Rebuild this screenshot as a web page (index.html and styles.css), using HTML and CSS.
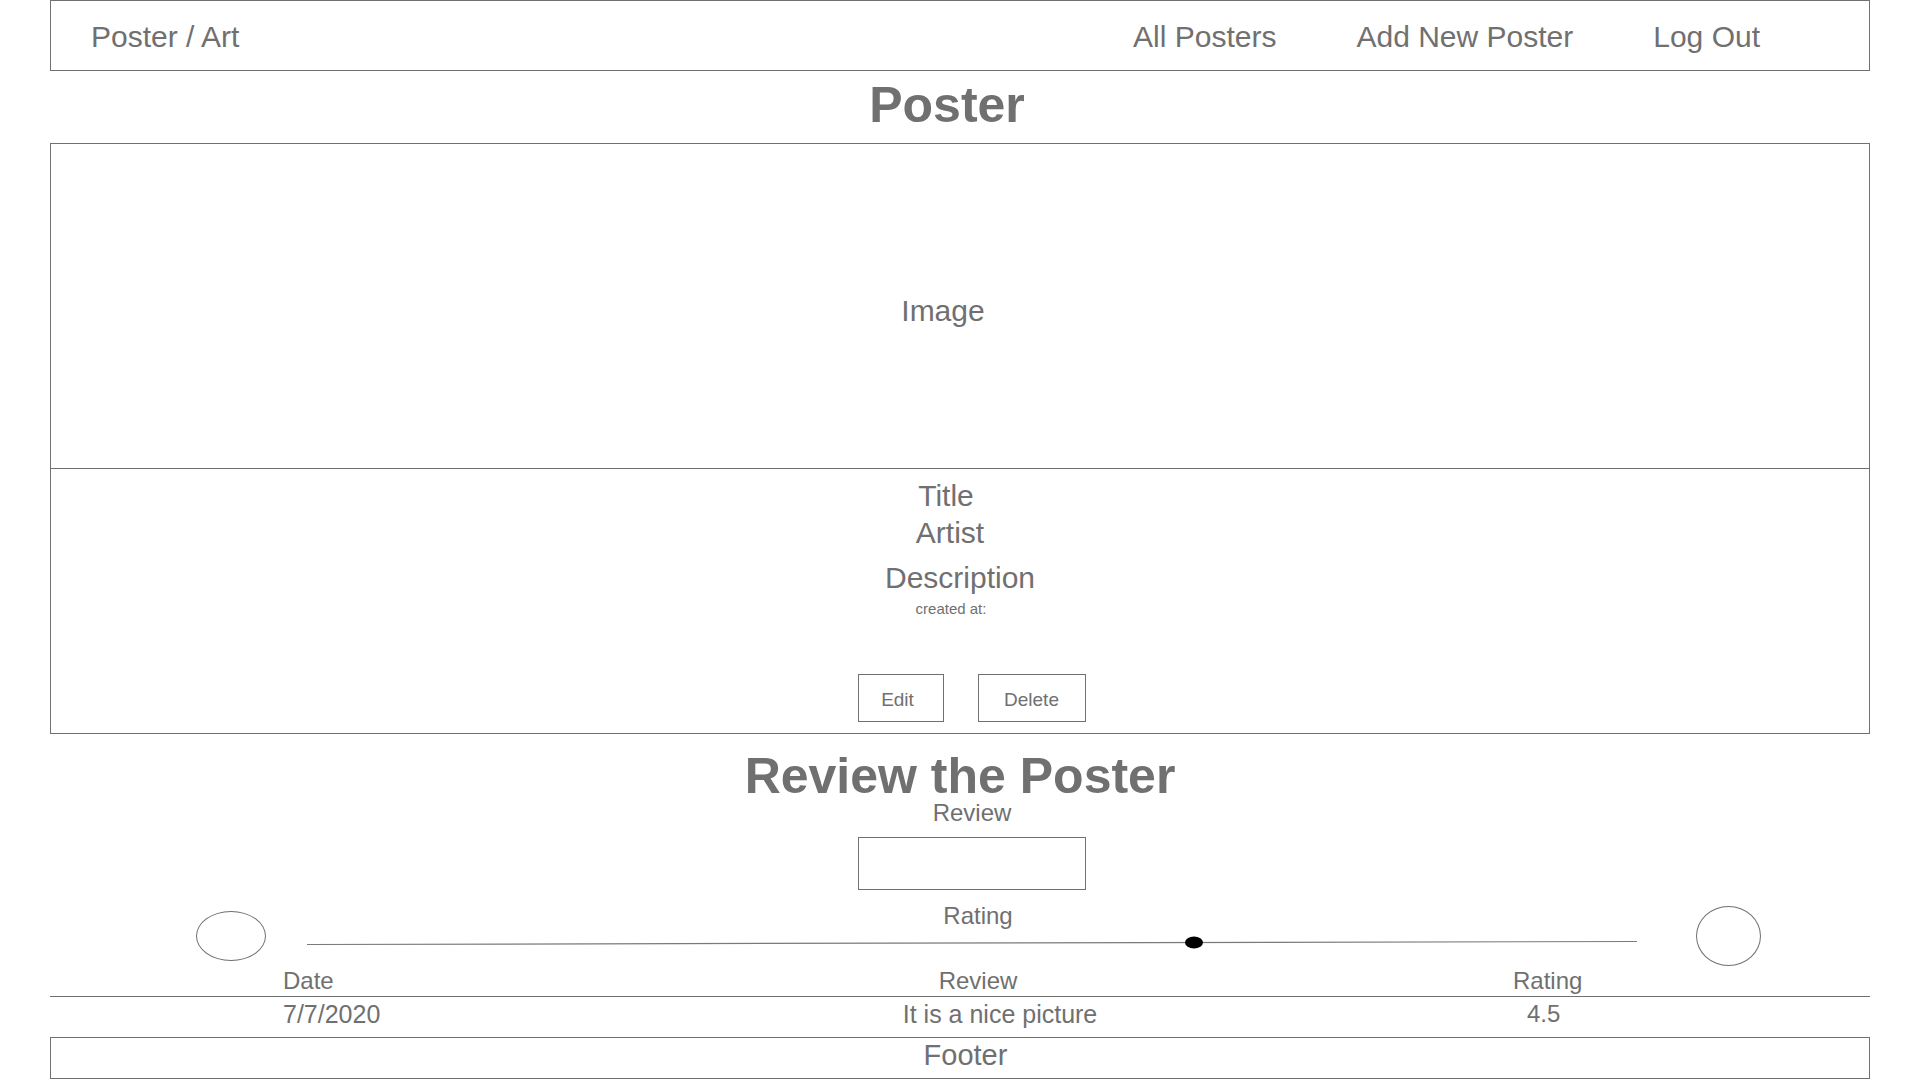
FILE: index.html
```html
<!DOCTYPE html>
<html lang="en">
<head>
<meta charset="utf-8">
<title>Poster</title>
<link rel="stylesheet" href="styles.css">
</head>
<body>
<div class="page">
  <header class="nav">
    <a class="brand">Poster / Art</a>
    <nav class="links">
      <a>All Posters</a>
      <a>Add New Poster</a>
      <a>Log Out</a>
    </nav>
  </header>

  <h1 class="page-title">Poster</h1>

  <section class="card">
    <div class="image-area">Image</div>
    <div class="details">
      <div class="line title">Title</div>
      <div class="line artist">Artist</div>
      <div class="line desc">Description</div>
      <div class="created">created at:</div>
      <div class="actions">
        <button class="btn btn-edit">Edit</button>
        <button class="btn btn-delete">Delete</button>
      </div>
    </div>
  </section>

  <h2 class="review-title">Review the Poster</h2>
  <div class="review-label">Review</div>
  <div class="input-wrap"><input class="review-input" type="text"></div>

  <div class="rating-row">
    <div class="knob knob-left"></div>
    <div class="slider">
      <div class="rating-label">Rating</div>
      <svg class="track" width="1330" height="24" viewBox="0 0 1330 24">
        <line x1="0" y1="16.5" x2="1330" y2="13.5" stroke="#7a7a7a" stroke-width="1.2"/>
        <ellipse cx="887" cy="14.5" rx="9" ry="6" fill="#000"/>
      </svg>
    </div>
    <div class="knob knob-right"></div>
  </div>

  <div class="reviews">
    <div class="th c-date">Date</div>
    <div class="th c-review">Review</div>
    <div class="th c-rating">Rating</div>
    <div class="td c-date">7/7/2020</div>
    <div class="td c-review v">It is a nice picture</div>
    <div class="td c-rating v">4.5</div>
  </div>

  <footer class="footer">Footer</footer>
</div>
</body>
</html>
```

FILE: styles.css
```css
html, body {
  margin: 0;
  padding: 0;
  background: #fff;
}

.page {
  margin: 0 50px;
  font-family: "Liberation Sans", Arial, Helvetica, sans-serif;
  color: #707070;
}

/* navigation */
.nav {
  display: flex;
  align-items: center;
  justify-content: space-between;
  height: 71px;
  box-sizing: border-box;
  border: 1px solid #707070;
  padding: 2px 109px 0 40px;
  font-size: 30px;
  line-height: 34px;
}

.links {
  display: flex;
  gap: 80px;
}

.nav a {
  color: #707070;
  text-decoration: none;
}

/* page heading */
.page-title {
  margin: 0;
  font-size: 50px;
  font-weight: bold;
  line-height: 60px;
  text-align: center;
  padding: 4px 26px 8px 0;
}

/* poster card */
.card {
  border: 1px solid #707070;
}

.image-area {
  height: 325px;
  box-sizing: border-box;
  border-bottom: 1px solid #707070;
  display: flex;
  align-items: center;
  justify-content: center;
  padding: 10px 34px 0 0;
  font-size: 30px;
  line-height: 34px;
}

.details {
  padding: 8px 0 11px;
  text-align: center;
}

.line {
  font-size: 30px;
  line-height: 37px;
}

.title { padding-right: 28px; }
.artist { padding-right: 20px; }
.desc { margin-top: 8px; }

.created {
  font-size: 15px;
  line-height: 26px;
  padding-right: 18px;
}

.actions {
  display: flex;
  justify-content: center;
  gap: 34px;
  margin-top: 52px;
  padding-left: 23px;
}

.btn {
  height: 48px;
  box-sizing: border-box;
  border: 1px solid #707070;
  background: #fff;
  color: #707070;
  font-family: "Liberation Sans", Arial, sans-serif;
  font-size: 19px;
  padding: 3px 0 0;
  margin: 0;
}

.btn-edit { width: 86px; padding-right: 6px; }
.btn-delete { width: 108px; }

/* review form */
.review-title {
  margin: 0;
  font-size: 50px;
  font-weight: bold;
  line-height: 50px;
  padding-top: 17px;
  text-align: center;
}

.review-label {
  font-size: 24px;
  line-height: 24px;
  text-align: center;
  padding-left: 24px;
}

.input-wrap {
  display: flex;
  justify-content: center;
  padding-left: 23px;
  margin-top: 12px;
}

.review-input {
  display: block;
  width: 228px;
  height: 53px;
  box-sizing: border-box;
  border: 1px solid #707070;
  margin: 0;
  padding: 0;
  background: #fff;
}

.rating-row {
  display: flex;
  align-items: flex-start;
  height: 60px;
  margin-top: 16px;
  padding-left: 146px;
}

.knob {
  box-sizing: border-box;
  border: 1px solid #707070;
  border-radius: 50%;
  flex: none;
}

.knob-left {
  width: 70px;
  height: 50px;
  margin-top: 5px;
}

.slider {
  width: 1330px;
  margin-left: 41px;
  display: flex;
  flex-direction: column;
  flex: none;
}

.rating-label {
  font-size: 24px;
  line-height: 24px;
  margin-top: -2px;
  text-align: center;
  padding-left: 12px;
}

.track {
  display: block;
}

.knob-right {
  width: 65px;
  height: 60px;
  margin-left: 59px;
}

/* reviews table */
.reviews {
  display: grid;
  grid-template-columns: 600px 660px 1fr;
}

.th {
  font-size: 24px;
  line-height: 30px;
  border-bottom: 1px solid #707070;
}

.td {
  font-size: 25px;
  line-height: 34px;
}

.c-date { padding-left: 233px; }
.th.c-review { text-align: center; padding-right: 4px; }
.td.c-review { text-align: center; padding-left: 40px; }
.th.c-rating { padding-left: 203px; }
.td.c-rating { padding-left: 217px; font-size: 24px; }

/* footer */
.footer {
  margin-top: 6px;
  height: 42px;
  box-sizing: border-box;
  border: 1px solid #707070;
  font-size: 29px;
  line-height: 34px;
  text-align: center;
  padding-left: 11px;
}
```
